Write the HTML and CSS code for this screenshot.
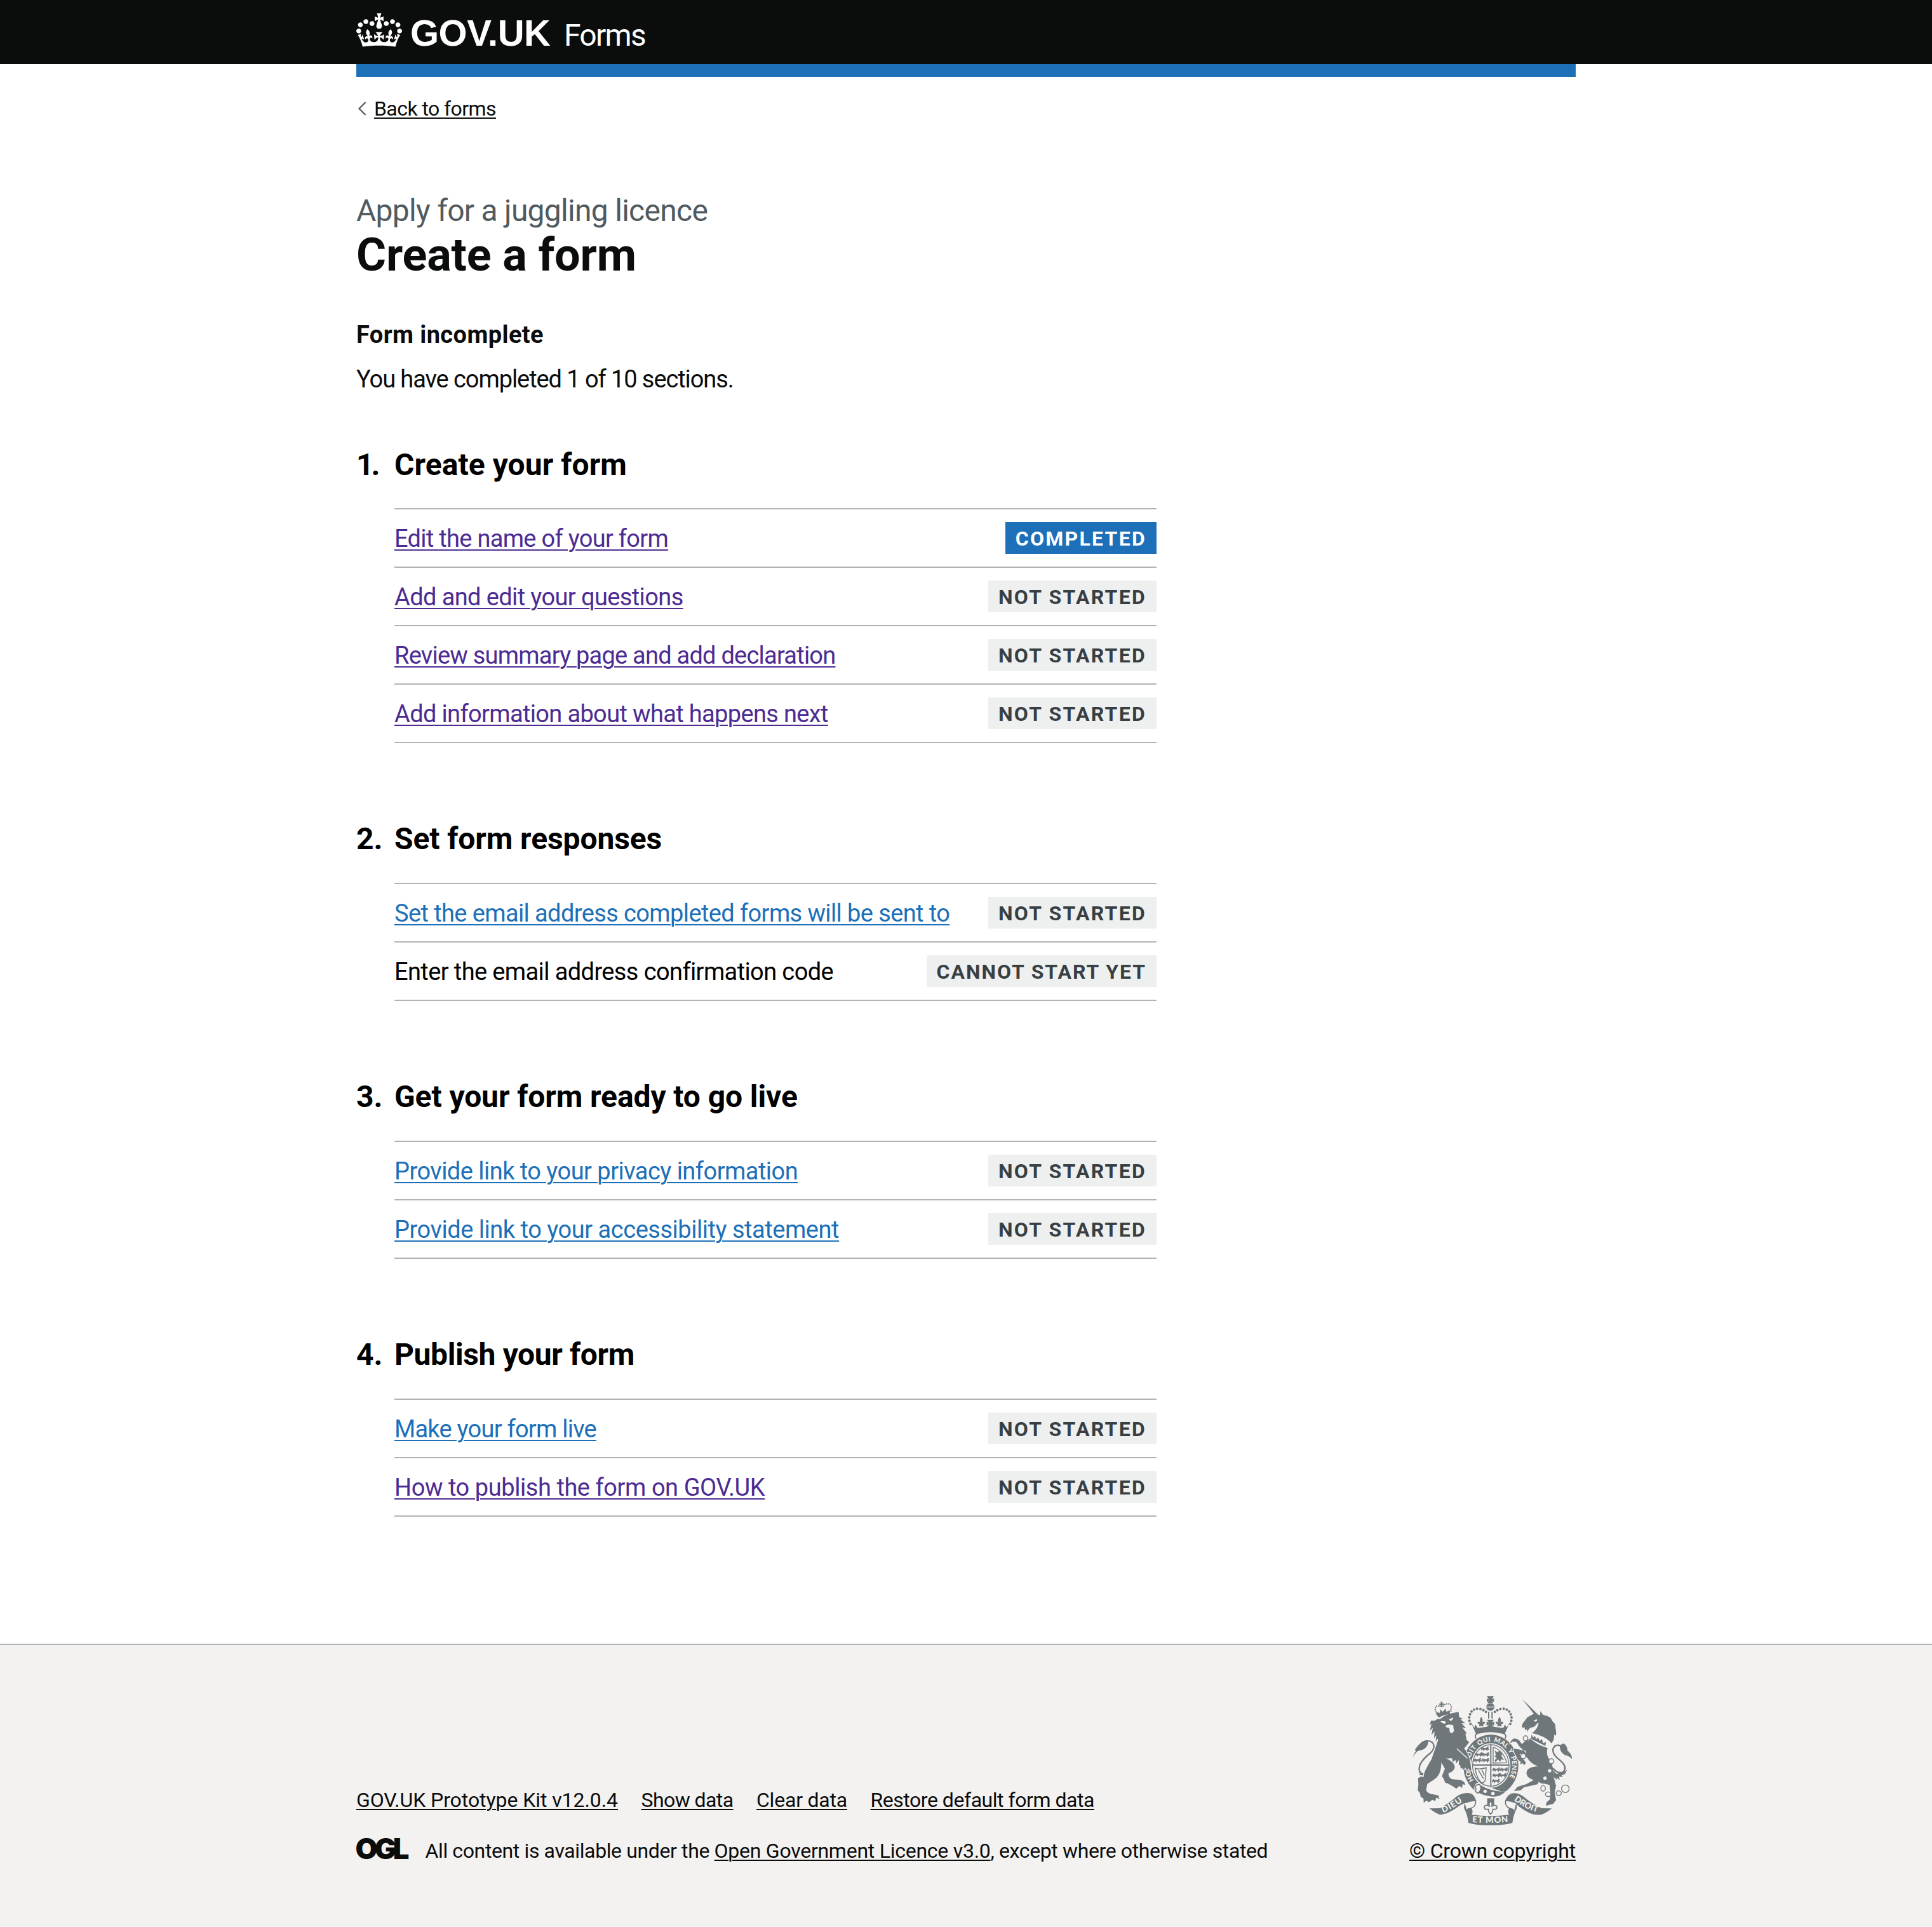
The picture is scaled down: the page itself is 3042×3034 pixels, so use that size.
FILE: index.html
```html
<!DOCTYPE html>
<html lang="en">
<head>
<meta charset="utf-8">
<title>Create a form – GOV.UK Forms</title>
<link rel="stylesheet" href="styles.css">
</head>
<body>
<header class="header">
  <div class="container header__inner">
    <svg class="header__crown" viewBox="0 0 132 97" aria-hidden="true"><path fill="currentColor" fill-rule="evenodd" d="M25 30.2c3.5 1.5 7.7-.2 9.1-3.7 1.5-3.6-.2-7.8-3.9-9.2-3.6-1.4-7.6.3-9.1 3.9-1.4 3.5.3 7.5 3.9 9zM9 39.5c3.6 1.5 7.8-.2 9.2-3.7 1.5-3.6-.2-7.8-3.9-9.1-3.6-1.5-7.6.2-9.1 3.8-1.4 3.5.3 7.5 3.8 9zM4.4 57.2c3.5 1.5 7.7-.2 9.1-3.8 1.5-3.6-.2-7.7-3.9-9.1-3.5-1.5-7.6.3-9.1 3.8-1.4 3.5.3 7.6 3.9 9.1zm38.3-21.4c3.5 1.5 7.7-.2 9.1-3.8 1.5-3.6-.2-7.7-3.9-9.1-3.6-1.5-7.6.3-9.1 3.8-1.3 3.6.4 7.7 3.9 9.1zm64.4-5.6c-3.6 1.5-7.8-.2-9.1-3.7-1.5-3.6.2-7.8 3.8-9.2 3.6-1.4 7.7.3 9.2 3.9 1.3 3.5-.4 7.5-3.9 9zm15.9 9.3c-3.6 1.5-7.7-.2-9.1-3.7-1.5-3.6.2-7.8 3.7-9.1 3.6-1.5 7.7.2 9.2 3.8 1.5 3.5-.3 7.5-3.8 9zm4.7 17.7c-3.6 1.5-7.8-.2-9.2-3.8-1.5-3.6.2-7.7 3.9-9.1 3.6-1.5 7.7.3 9.2 3.8 1.3 3.5-.4 7.6-3.9 9.1zM89.3 35.8c-3.6 1.5-7.8-.2-9.2-3.8-1.4-3.6.2-7.7 3.9-9.1 3.6-1.5 7.7.3 9.2 3.8 1.4 3.6-.3 7.7-3.9 9.1zM69.7 17.7l8.9 4.7V9.3l-8.9 2.8c-.2-.3-.5-.6-.9-.9L72.4 0H59.6l3.5 11.2c-.3.3-.6.5-.9.9l-8.8-2.8v13.1l8.8-4.7c.3.3.6.7.9.9l-5 15.4v.1c-.2.8-.4 1.6-.4 2.4 0 4.1 3.1 7.5 7 8.1h.2c.3 0 .7.1 1 .1.4 0 .7 0 1-.1h.2c4-.6 7.1-4.1 7.1-8.1 0-.8-.1-1.7-.4-2.4V34l-5.1-15.4c.4-.2.7-.6 1-.9zM66 92.8c16.9 0 32.8 1.1 47.1 3.2 4-16.9 8.9-26.7 14-33.5l-9.6-3.4c1 4.9 1.1 7.2 0 10.2-1.5-1.4-3-4.3-4.2-8.7L108.6 76c2.8-2 5-3.2 7.5-3.3-4.4 9.4-10 11.9-13.6 11.2-4.3-.8-6.3-4.6-5.6-7.9 1-4.7 5.7-5.9 8-.5 4.3-8.7-3-11.4-7.6-8.8 7.1-7.2 7.9-13.5 2.1-21.1-8 6.1-8.1 12.3-4.5 20.8-4.7-5.4-12.1-2.5-9.5 6.2 3.4-5.2 7.9-2 7.2 3.1-.6 4.3-6.4 7.8-13.5 7.2-10.3-.9-10.9-8-11.2-13.8 2.5-.5 7.1 1.8 11 7.3L80.2 60c-4.1 4.4-8 5.3-12.3 5.4 1.4-4.4 8-11.6 8-11.6H55.5s6.4 7.2 7.9 11.6c-4.2-.1-8-1-12.3-5.4l1.4 16.4c3.9-5.5 8.5-7.7 10.9-7.3-.3 5.8-.9 12.8-11.1 13.8-7.2.6-12.9-2.9-13.5-7.2-.7-5 3.8-8.3 7.1-3.1 2.7-8.7-4.6-11.6-9.4-6.2 3.7-8.5 3.6-14.7-4.6-20.8-5.8 7.6-5 13.9 2.2 21.1-4.7-2.6-11.9.1-7.7 8.8 2.3-5.5 7.1-4.2 8.1.5.7 3.3-1.3 7.1-5.7 7.9-3.5.7-9-1.8-13.5-11.2 2.5.1 4.7 1.3 7.5 3.3l-4.7-15.4c-1.2 4.4-2.7 7.2-4.3 8.7-1.1-3-.9-5.3 0-10.2l-9.5 3.4c5 6.9 9.9 16.7 14 33.5 14.8-2.1 30.8-3.2 47.7-3.2z"/></svg>
    <span class="header__logo">GOV.UK</span>
    <span class="header__product">Forms</span>
  </div>
</header>
<div class="container">
  <div class="phase-bar"></div>
  <nav class="back">
    <svg class="back__arrow" viewBox="0 0 28 40" aria-hidden="true"><path d="M14.500 10L4.500 20l10 10" fill="none" stroke="currentColor" stroke-width="2.200"/></svg>
    <a class="back__link" href="#">Back to forms</a>
  </nav>
  <main class="main">
    <span class="caption">Apply for a juggling licence</span>
    <h1 class="title">Create a form</h1>
    <h2 class="status">Form incomplete</h2>
    <p class="progress">You have completed 1 of 10 sections.</p>

    <section class="section section--first">
      <h2 class="section__title"><span class="section__number">1.</span><span class="w-create">Create your form</span></h2>
      <ul class="tasks">
        <li class="task"><a class="task__name link link--visited w-edit" href="#">Edit the name of your form</a><strong class="tag tag--done">Completed</strong></li>
        <li class="task"><a class="task__name link link--visited" href="#">Add and edit your questions</a><strong class="tag">Not started</strong></li>
        <li class="task"><a class="task__name link link--visited w-review" href="#">Review summary page and add declaration</a><strong class="tag">Not started</strong></li>
        <li class="task"><a class="task__name link link--visited w-next" href="#">Add information about what happens next</a><strong class="tag">Not started</strong></li>
      </ul>
    </section>

    <section class="section">
      <h2 class="section__title"><span class="section__number">2.</span><span>Set form responses</span></h2>
      <ul class="tasks">
        <li class="task"><a class="task__name link" href="#">Set the email address completed forms will be sent to</a><strong class="tag">Not started</strong></li>
        <li class="task"><span class="task__name">Enter the email address confirmation code</span><strong class="tag tag--wide">Cannot start yet</strong></li>
      </ul>
    </section>

    <section class="section">
      <h2 class="section__title"><span class="section__number">3.</span><span>Get your form ready to go live</span></h2>
      <ul class="tasks">
        <li class="task"><a class="task__name link w-privacy" href="#">Provide link to your privacy information</a><strong class="tag">Not started</strong></li>
        <li class="task"><a class="task__name link w-access" href="#">Provide link to your accessibility statement</a><strong class="tag">Not started</strong></li>
      </ul>
    </section>

    <section class="section">
      <h2 class="section__title"><span class="section__number">4.</span><span class="w-publish">Publish your form</span></h2>
      <ul class="tasks">
        <li class="task"><a class="task__name link w-live" href="#">Make your form live</a><strong class="tag">Not started</strong></li>
        <li class="task"><a class="task__name link link--visited w-howto" href="#">How to publish the form on GOV.UK</a><strong class="tag">Not started</strong></li>
      </ul>
    </section>
  </main>
</div>

<footer class="footer">
  <div class="container footer__inner">
    <div class="footer__meta">
      <ul class="footer__links">
        <li><a class="footer__link w-kit" href="#">GOV.UK Prototype Kit v12.0.4</a></li>
        <li><a class="footer__link w-show" href="#">Show data</a></li>
        <li><a class="footer__link w-clear" href="#">Clear data</a></li>
        <li><a class="footer__link w-restore" href="#">Restore default form data</a></li>
      </ul>
      <div class="licence">
        <svg class="licence__logo" viewBox="0 0 82 40" aria-label="OGL"><text x="-1.500" y="32.500" textLength="80" lengthAdjust="spacingAndGlyphs">OGL</text></svg>
        <span>All content is available under the <a class="footer__link w-ogl" href="#">Open Government Licence v3.0</a>, except where otherwise stated</span>
      </div>
    </div>
    <div class="copyright">
      <svg class="arms" viewBox="75 60 750 612" aria-hidden="true">
        <defs>
          <path id="garter" d="M365 462A101 113 0 1 1 507 476"/>
          <path id="scroll-left" d="M217 612Q262 594 316 554"/>
          <path id="scroll-right" d="M551 553Q604 594 668 613"/>
          <path id="scroll-mid" d="M354 657Q440 664 528 656"/>
          <path id="passant" d="M0 6l7-7 5 5h12l6-6 7 1-3 6 5 10-7-3-3 8-6-8h-7l-4 8-4-9-7 6z"/>
          <path id="fleur" d="M0-24Q-11-12-4 2Q-15-7-18 3Q-17 10-10 8Q-7 14-12 19H12Q7 14 10 8Q17 10 18 3Q15-7 4 2Q11-12 0-24z"/>
        </defs>
        <!-- garter and shield -->
        <g class="arms__ink">
          <path fill-rule="evenodd" d="M442 243a130 146 0 1 0 .1 0zM442 284a93 105 0 1 1-.1 0z"/>
          <ellipse cx="442" cy="389" rx="86" ry="98" fill="none" stroke="currentColor" stroke-width="4"/>
          <path d="M439 290h6v196h-6zM354 384h176v6H354z"/>
          <use href="#passant" x="396" y="302"/><use href="#passant" x="398" y="329"/><use href="#passant" x="398" y="356"/>
          <use href="#passant" x="366" y="329"/><use href="#passant" x="360" y="356"/>
          <path d="M453 304l10 2q40 18 54 70l-64 2z" fill="none" stroke="currentColor" stroke-width="4"/>
          <path d="M460 318l12 8 10-6 14 14-4 10 12 20-12-4-6 12-10-12-12 14-4-10 10-10-10-8 6-6z"/>
          <path d="M368 402q18 8 52-2l-4 58q-6 14-16 14-26-22-32-70zM384 412l24 40M400 410l12 26" fill="none" stroke="currentColor" stroke-width="4.500"/>
          <use href="#passant" x="450" y="400"/><use href="#passant" x="450" y="427"/><use href="#passant" x="448" y="454"/>
          <use href="#passant" x="486" y="400"/><use href="#passant" x="480" y="427"/>
        </g>
        <g class="arms__motto">
          <text dx="4 0 0 34 2 2 2 6 1 1 1 6 1 1 0 6 0 6 1 1 1 1 1"><textPath href="#garter">HO SOIT QUI MAL Y PENSE</textPath></text>
        </g>
        <g class="arms__paper">
          <path d="M370 476q14-12 26 2l98 34 32 0-10 22-30 12-70-6-44-22q-16-18-2-42z"/>
        </g>
        <g class="arms__ink">
          <path d="M394 482q42 28 116 32-24 24-60 22-34-2-70-20 20-8 14-34z"/>
          <path d="M388 478q-22 0-18 18 4 6 0 14 8 14 18 6M388 478q14 16 0 38" fill="none" stroke="currentColor" stroke-width="5"/>
        </g>
        <!-- lion -->
        <g class="arms__ink">
          <path d="M180 388q-32 46-58 42-28-10-13-48 14-26 48-52 18-18 16-36-6-24-36-20" fill="none" stroke="currentColor" stroke-width="7"/>
          <path d="M75 352q4-24 14-30-8-2-2-12 10-16 28-32 22-12 28-8 8 18-10 36-8 10-34 14-16 8-24 32zM92 418l24 12 26-10 16-8-8 18-16 6-16 10 4-10-20-2 6-6z"/>
          <path class="arms__beast" d="M176 178l16-9 10 1q28-24 74-31l14-3 2 24 18 9-11 3 22 18-17-1 21 25-18-5 22 29-7 1 6 30 12 10-24 30q20 22 28 57l6 44-7 5-7-14-6 14-8-16-9 12-6-10-7 3-3-18-7 2 2-25-14 17-2-17-14 9-3-17-29 1q37 14 42 38-2 24-30 32 0 22 18 28l40 4q20 6 22 24l-13-5-3 18-13-9-14 13-20-14-22-12-11-3-6-18-9-12 14-36-17-30q2 62-38 84l-28 18-6 30q10 18 36 20l22 4 6 18-16-7-4 16-14-6-17 12-10-8-14 10-1-20-13-8-4-18-10-12 3-30-2-28 14-8 12 4 4-22q10-24 34-64l32-92-6-4-6 16 2-32-10 14 2-34-14 18 6-34-14 14 8-34-10 8 8-22z"/>
          <path d="M190 156l-6-20 17 5 3-17 11 12 12-15 6 14 15-7 1 20q-28 0-51 15z"/>
          <path d="M187 148l-7-20q-4-22 18-20l10 2q8 0 12-4 14-14 30-6 8 8 4 20l-1 18" fill="none" stroke="currentColor" stroke-width="6" stroke-dasharray="6 4"/>
          <path d="M205 88h9l-2 8 8-1v9l-8-2 2 12h-9l1-11-7 2v-9l7 1z"/>
        </g>
        <!-- unicorn -->
        <g class="arms__ink">
          <path d="M590 75l76 74 9 2 1-19 13 18q38 6 44 30 18 14 14 30 6 26 2 38l-8-4q2 26-13 40-26-34-92-48 26-16 32-46-6-4-16 12-10 10-22 8-12 10-16 20l-2-13-8 6-4-18-3 8-8-6 2-14 24-32 30-16z"/>
          <path class="arms__beast" d="M620 322l-24-4q-21-18-33-40l-17-2-12 8q2-16 18-22 23 0 32 20 6 10 13-2l23-16zM620 352l-20-32q-22-8-48-10-4 10 4 24l14 28 14 10-4 12 12-6 8 10 8-12-10-14-14-10-6-16 14-4q8 13 20 20z"/>
          <path class="arms__beast" d="M552 510l16-20 40-12 36-20q-44-16-30-46 12-20 66-20 30 30 0 34-16 6-13 14 10 18-4 38l-64 14-16 14z"/>
          <path d="M627 261q32 30 83 46-8 30 8 52 20 24 18 70l8 34 6 22-6 30 6 38-14 18-34 8 3-16 16-14 2-38-4-30-26-6q-32 2-30-40l2-42q-38-14-54-46-8-30 0-60z"/>
          <path d="M736 402q20 26 44 20 20-14 8-36-8-14-34-34-22-20-18-42 10-24 36-14" fill="none" stroke="currentColor" stroke-width="7"/>
          <path d="M768 293l18-8q18 10 18 34 20 14 22 40-16-18-32-18-30-16-26-48zM736 410l16 18 26-4 24-14-10 20-16 6 6 8-18-2 4 14-16-8 2 10-16-16z"/>
        </g>
        <!-- crown -->
        <g class="arms__ink">
          <path d="M424 61h32l-8 16 9-5v17l-9-4 6 9h-28l6-9-9 4V72l9 5zM420 111q4-16 20-16 16 0 20 16zM420 115h40q-4 15-20 16-16-1-20-16zM429 136h6v31h-6zM445 136h6v31h-6z"/>
          <path d="M346 193v.1M341 178v.1M340 162v.1M344 147v.1M351 134v.1M363 125v.1M377 121v.1M393 122v.1M407 128v.1M419 136v.1M534 193v.1M539 178v.1M540 162v.1M536 147v.1M529 134v.1M517 125v.1M503 121v.1M487 122v.1M473 128v.1M461 136v.1" stroke="currentColor" stroke-width="12" stroke-linecap="round" fill="none"/>
          <use href="#fleur" x="397" y="184"/><use href="#fleur" x="483" y="184"/>
          <path d="M424 173h32l-9 14 11-6v20l-11-5 9 12h-32l9-12-11 5v-20l11 6z"/>
          <path d="M350 190l14 20 6-14 10 16 60-8 60 8 10-16 6 14 14-20-22 50q-68-20-136 0z"/>
          <path d="M372 262q-10-22 14-26 54-14 108 0 26 4 16 26" fill="none" stroke="currentColor" stroke-width="5"/>
        </g>
        <g class="arms__paper">
          <path d="M204 180l22 0 4 10q-16 4-26-10zM245 170l20-8q-2 14-14 18zM226 202l16-6 22 2 4 28q-10 18-20 4l-2-18-12-2zM643 178l16-8 2 8-8 4zM283 308l50 45-2 4-50-45z"/>
          <path d="M630 234l94 50-12 20-86-44z"/>
          <circle cx="720" cy="414" r="8"/><circle cx="698" cy="449" r="8"/>
          <circle cx="415" cy="511" r="8"/><circle cx="452" cy="521" r="8"/>
        </g>
        <g class="arms__ink">
          <path d="M634 243l8 14 8-8 6 16 10-8 6 16 12-8 4 18 14-4-2 18-68-34z"/>
          <g class="arms__chain">
            <ellipse cx="606" cy="261" rx="11" ry="12"/><ellipse cx="595" cy="345" rx="12" ry="12"/><ellipse cx="728" cy="369" rx="12" ry="12"/>
            <ellipse cx="689" cy="497" rx="11" ry="13"/><ellipse cx="713" cy="525" rx="13" ry="11"/><ellipse cx="763" cy="520" rx="12" ry="11"/><circle cx="794" cy="499" r="18"/>
          </g>
          <!-- scroll -->
          <path d="M152 592l50-1q44-24 76-54 32-24 70-16 20 10 24 38l-24-4q-10 10-24 8-30 14-56 34-42 28-70 23-22-8-46-28zM730 592l-48-1q-50-24-84-54-28-22-58-16-24 10-30 36l24-2q10 12 24 14 40 34 76 48 22 8 50 3 22-8 46-28z"/>
          <path d="M320 564q-6 12-4 28 16 30 20 68 50 14 104 11 60 2 104-11 4-34 20-68 2-16-4-28l-20 12q-24 22-12 46-88 12-176 0 12-26-14-46z"/>
          <path d="M318 566q26-10 52-12 4 36-36 40l-4 8M562 566q-24-10-50-12-6 34 34 42l6 8" class="arms__fold"/>
          <path d="M425 544h33v32h-33z"/>
        </g>
        <path d="M441 556q-12 14-4 28-10-12-24-4-6 10 4 16h14q-2 12 10 24 12-12 10-24h14q10-6 4-16-14-8-24 4 8-14-4-28z" class="arms__fold"/>
        <g class="arms__motto arms__motto--scroll">
          <text><textPath href="#scroll-left" textLength="106">DIEU</textPath></text>
          <text><textPath href="#scroll-right" textLength="124">DROIT</textPath></text>
          <text><textPath href="#scroll-mid" textLength="170">ET MON</textPath></text>
        </g>
      </svg>
      <a class="footer__link w-crown" href="#">© Crown copyright</a>
    </div>
  </div>
</footer>
</body>
</html>
```
FILE: styles.css
```css
* {
  box-sizing: border-box;
}

body {
  margin: 0;
  background: #fff;
  color: #0b0c0c;
  font-family: Roboto, "Liberation Sans", sans-serif;
  font-size: 38px;
  line-height: 50px;
}

h1,
h2,
p,
ul {
  margin: 0;
  padding: 0;
}

ul {
  list-style: none;
}

.container {
  width: 1920px;
  margin: 0 auto;
}

/* Header */
.header {
  height: 101px;
  background: #0b0c0c;
  color: #fff;
}

.header__inner {
  display: flex;
  align-items: baseline;
  padding-top: 21px;
}

.header__crown {
  align-self: flex-start;
  width: 72px;
  height: 53px;
}

.header__logo {
  margin: 2px 0 0 13px;
  width: 242px;
  font: bold 58px/58px "Liberation Sans", Arial, sans-serif;
  letter-spacing: -0.5px;
}

.header__product {
  font-size: 48px;
  line-height: 50px;
  letter-spacing: -1.7px;
}

.phase-bar {
  height: 20px;
  background: #1d70b8;
}

/* Back link */
.back {
  display: flex;
  padding-top: 30px;
  font-size: 32px;
  line-height: 40px;
}

.back__arrow {
  width: 28px;
  height: 40px;
  color: #505a5f;
}

.back__link,
.footer__link {
  color: #0b0c0c;
  text-decoration: underline;
  text-decoration-thickness: 2px;
  text-underline-offset: 3px;
}

.back__link {
  letter-spacing: -0.57px;
}

/* Page headings */
.main {
  width: 1260px;
  padding: 111px 0 200px;
}

.caption {
  display: block;
  margin-bottom: 2px;
  color: #505a5f;
  font-size: 48px;
  line-height: 60px;
  letter-spacing: -0.72px;
}

.title {
  font-size: 72px;
  line-height: 75px;
  letter-spacing: -0.15px;
}

.status {
  margin-top: 63px;
  font-size: 38px;
  line-height: 50px;
  letter-spacing: 0.4px;
}

.progress {
  margin-top: 20px;
  letter-spacing: -1.08px;
}

/* Task list */
.section {
  margin-top: 121px;
  color: #000;
}

.section--first {
  margin-top: 80px;
}

.section__title {
  display: flex;
  margin-bottom: 39px;
  font-size: 48px;
  line-height: 60px;
  letter-spacing: -0.1px;
}

.section--first .section__title {
  margin-bottom: 38px;
}

.section__number {
  width: 60px;
}

.section--first .section__number {
  letter-spacing: -4px;
}

.tasks {
  margin-left: 60px;
  border-top: 2px solid #b1b4b6;
}

.task {
  display: flex;
  justify-content: space-between;
  align-items: center;
  height: 92px;
  border-bottom: 2px solid #b1b4b6;
  letter-spacing: -0.61px;
}

.task__name {
  padding-top: 2px;
}

.link {
  color: #1d70b8;
  text-decoration: underline;
  text-decoration-thickness: 2px;
  text-underline-offset: 4px;
}

.link--visited {
  color: #4c2c92;
}

.tag {
  padding: 2px 16px 0;
  background: #eeefef;
  color: #383f43;
  font-size: 32px;
  line-height: 48px;
  letter-spacing: 2.26px;
  text-transform: uppercase;
}

.tag--done {
  background: #1d70b8;
  color: #fff;
}

.tag--wide {
  letter-spacing: 1.94px;
}

/* Footer */
.footer {
  border-top: 2px solid #b1b4b6;
  background: #f3f2f1;
  padding: 80px 0 100px;
  font-size: 32px;
  line-height: 40px;
  letter-spacing: -0.38px;
}

.footer__inner {
  display: flex;
  justify-content: space-between;
  align-items: flex-end;
}

.footer__links {
  display: flex;
  gap: 36.5px;
  margin-bottom: 40px;
}

.licence {
  display: flex;
  white-space: nowrap;
}

.licence__logo {
  width: 82px;
  height: 40px;
  margin-right: 26.5px;
  overflow: visible;
  fill: #0b0c0c;
  font: 900 45px Inter, sans-serif;
  letter-spacing: -5px;
}

.copyright {
  display: flex;
  flex-direction: column;
  align-items: center;
}

.arms {
  width: 250px;
  height: 204px;
  margin-bottom: 20px;
}

.arms__ink {
  color: #6f777b;
  fill: #6f777b;
}

.arms__paper {
  fill: #f3f2f1;
}

.arms__beast {
  stroke: #f3f2f1;
  stroke-width: 7px;
  paint-order: stroke;
}

.arms__chain {
  fill: #f3f2f1;
  stroke: #6f777b;
  stroke-width: 4px;
}

.arms__fold {
  fill: #f3f2f1;
  stroke: #6f777b;
  stroke-width: 5px;
}

.arms__motto {
  fill: #f3f2f1;
  font: 900 31px Lato, sans-serif;
  letter-spacing: 0;
}

.arms__motto--scroll {
  font-size: 40px;
}

/* Letter fitting for individual labels */
.w-create { letter-spacing: 0.06px; }
.w-publish { letter-spacing: -0.38px; }
.w-edit { letter-spacing: -0.7px; }
.w-review { letter-spacing: -0.77px; }
.w-next { letter-spacing: -0.65px; }
.w-privacy { letter-spacing: -0.53px; }
.w-access { letter-spacing: -0.47px; }
.w-live { letter-spacing: -0.75px; }
.w-howto { letter-spacing: -0.44px; }
.w-kit { letter-spacing: -0.07px; }
.w-show { letter-spacing: -0.58px; }
.w-clear { letter-spacing: -0.21px; }
.w-restore { letter-spacing: -0.46px; }
.w-ogl { letter-spacing: -0.26px; }
.w-crown { letter-spacing: -0.17px; }
```
